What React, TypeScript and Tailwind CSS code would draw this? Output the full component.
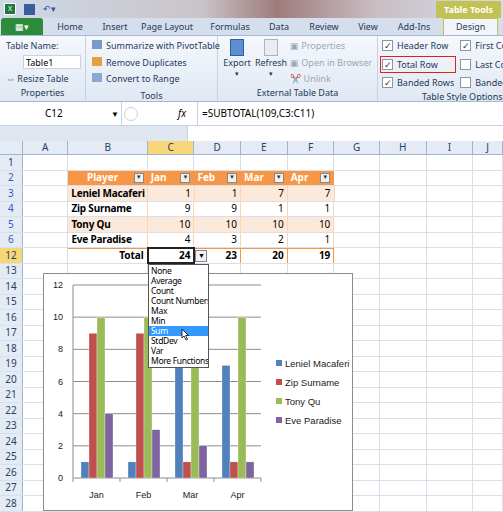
import React from 'react';

const cols = [
  { k: 'A', w: 46 }, { k: 'B', w: 80 }, { k: 'C', w: 47 }, { k: 'D', w: 47 },
  { k: 'E', w: 47 }, { k: 'F', w: 47 }, { k: 'G', w: 46 }, { k: 'H', w: 47 },
  { k: 'I', w: 47 }, { k: 'J', w: 30 },
];
const rowNums = [1, 2, 3, 4, 5, 6, 12, 13, 14, 15, 16, 17, 18, 19, 20, 21, 22, 23, 24, 25, 26, 27, 28];
const data: [string, number[]][] = [
  ['Leniel Macaferi', [1, 1, 7, 7]],
  ['Zip Surname', [9, 9, 1, 1]],
  ['Tony Qu', [10, 10, 10, 10]],
  ['Eve Paradise', [4, 3, 2, 1]],
];
const colors = ['#4f81bd', '#c0504d', '#9bbb59', '#8064a2'];

function Check({ on = true }: { on?: boolean }) {
  return (
    <span className="w-[11px] h-[11px] shrink-0 border border-[#8a96a8] bg-white inline-flex items-center justify-center text-[9px] leading-none text-[#333]">
      {on ? '✓' : ''}
    </span>
  );
}

function Ribbon() {
  return (
    <div className="text-[9px] text-[#1e395b] whitespace-nowrap">
      <div className="h-[18px] flex items-center gap-2 px-1 bg-[linear-gradient(90deg,#cfd9e8,#c9c4c8_40%,#a07b7c_55%,#c9bfc4_75%,#d6dde9)] relative">
        <span className="w-[12px] h-[12px] bg-[#1d7a3a] border border-white text-white text-[7px] flex items-center justify-center">X</span>
        <span className="w-[11px] h-[11px] bg-[#3b5e9a]" />
        <span className="text-[#2f5597]">↶▾</span>
        <div className="absolute right-[2px] top-[1px] h-[17px] px-2 bg-[#c2c254] text-white font-bold flex items-center">Table Tools</div>
      </div>
      <div className="h-[18px] flex items-end bg-[#d4deec] border-b border-[#a4b8d3]">
        <div className="w-[42px] h-[17px] bg-[#2e8b3c] rounded-t-[3px] mx-[1px] text-white flex items-center justify-center text-[9px]">▦▾</div>
        {['Home', 'Insert', 'Page Layout', 'Formulas', 'Data', 'Review', 'View', 'Add-Ins'].map((t, i) => (
          <span key={t} className={'h-[16px] flex items-center ' + ['w-[52px] justify-center', 'w-[38px] justify-center', 'w-[66px] justify-center', 'w-[60px] justify-center', 'w-[38px] justify-center', 'w-[52px] justify-center', 'w-[36px] justify-center', 'w-[56px] justify-center'][i]}>{t}</span>
        ))}
        <span className="h-[17px] px-3 ml-[1px] bg-[#f2f6fb] border border-b-0 border-[#c2c254] flex items-center">Design</span>
      </div>
      <div className="h-[66px] flex bg-[linear-gradient(#f5f8fc,#e0e8f3)] border-b border-[#a4b8d3] overflow-hidden">
        <div className="w-[86px] shrink-0 border-r border-[#c5d2e3] flex flex-col pl-[6px] pt-[3px]">
          <span>Table Name:</span>
          <span className="ml-[17px] mt-[2px] w-[58px] h-[14px] border border-[#c5d2e3] bg-white px-[2px] text-black">Table1</span>
          <span className="mt-[3px]"><span className="text-[#4a78b8]">⇔</span> Resize Table</span>
          <span className="mt-auto mb-[2px] text-center pr-[6px]">Properties</span>
        </div>
        <div className="w-[132px] shrink-0 border-r border-[#c5d2e3] flex flex-col pl-[6px] pt-[3px] gap-[3px]">
          <span><span className="inline-block w-[10px] h-[9px] bg-[#7a9bc8] mr-1" />Summarize with PivotTable</span>
          <span><span className="inline-block w-[10px] h-[9px] bg-[#e6a040] mr-1" />Remove Duplicates</span>
          <span><span className="inline-block w-[10px] h-[9px] bg-[#8aa8d0] mr-1" />Convert to Range</span>
          <span className="mt-auto mb-[2px] text-center pr-[6px]">Tools</span>
        </div>
        <div className="w-[160px] shrink-0 border-r border-[#c5d2e3] flex flex-col pt-[3px]">
          <div className="flex gap-[3px] pl-[4px]">
            <div className="flex flex-col items-center w-[30px]">
              <span className="w-[14px] h-[17px] bg-[#5b8fd1] border border-[#2f5fa0]" />
              <span>Export</span><span className="text-[7px] leading-none">▾</span>
            </div>
            <div className="flex flex-col items-center w-[32px]">
              <span className="w-[14px] h-[17px] bg-[#e8edf3] border border-[#a8b4c4]" />
              <span>Refresh</span><span className="text-[7px] leading-none">▾</span>
            </div>
            <div className="flex flex-col gap-[3px] text-[#9aa7b8]">
              <span>▣ Properties</span><span>▣ Open in Browser</span><span>✂ Unlink</span>
            </div>
          </div>
          <span className="mt-auto mb-[2px] text-center">External Table Data</span>
        </div>
        <div className="flex-1 flex flex-col pt-[3px] pl-[4px] overflow-hidden">
          <div className="flex gap-[6px]">
            <div className="flex flex-col gap-[5px]">
              <span className="flex items-center gap-[4px]"><Check />Header Row</span>
              <span className="flex items-center gap-[4px] border border-[#e02020] -mx-[2px] px-[1px] py-[1px] -my-[2px]"><Check />Total Row</span>
              <span className="flex items-center gap-[4px]"><Check />Banded Rows</span>
            </div>
            <div className="flex flex-col gap-[5px]">
              <span className="flex items-center gap-[4px]"><Check />First Co</span>
              <span className="flex items-center gap-[4px]"><Check on={false} />Last Co</span>
              <span className="flex items-center gap-[4px]"><Check on={false} />Bandec</span>
            </div>
          </div>
          <span className="mt-auto mb-[2px] pl-[40px]">Table Style Options</span>
        </div>
      </div>
      <div className="h-[24px] flex items-center bg-white border-b border-[#c5d2e3] text-[10px] text-black">
        <div className="w-[122px] flex items-center pl-[45px] border-r border-[#c5d2e3] h-full">C12<span className="ml-auto mr-[2px] text-[8px]">▼</span></div>
        <span className="w-[14px] h-[14px] rounded-full border border-[#c5d2e3] ml-[2px]" />
        <span className="italic ml-[40px] w-[14px]">fx</span>
        <span className="ml-[5px] border-l border-[#c5d2e3] pl-[4px] h-full flex items-center">=SUBTOTAL(109,C3:C11)</span>
      </div>
      <div className="h-[15px] bg-[#dfe6f0] w-[188px] border-r border-[#c5d2e3]" />
    </div>
  );
}

function Grid() {
  return (
    <div className="text-[10px] text-black">
      <div className="flex h-[14px] bg-[#e4ebf4] border-b border-[#9eb6ce]">
        <div className="w-[23px] border-r border-[#9eb6ce]" />
        {cols.map(c => (
          <div key={c.k} style={{ width: c.w }} className={'flex items-center justify-center border-r border-[#9eb6ce] text-[#27415f] ' + (c.k === 'C' ? 'bg-[#f8d77b]' : '')}>{c.k}</div>
        ))}
      </div>
      {rowNums.map(r => {
        const di = r >= 3 && r <= 6 ? r - 3 : -1;
        return (
          <div key={r} className="flex h-[15.5px] border-b border-[#dae0e8]">
            <div className={'w-[23px] flex items-center justify-center border-r border-[#9eb6ce] ' + (r === 12 ? 'bg-[#f8d77b] text-[#27415f]' : 'bg-[#e4ebf4] ' + (di >= 0 || r === 2 ? 'text-[#3a56c8]' : 'text-[#27415f]'))}>{r}</div>
            {cols.map((c, ci) => {
              let cls = 'border-r border-[#dae0e8] flex items-center px-[3px] whitespace-nowrap ';
              let content: React.ReactNode = '';
              const inTable = ci >= 1 && ci <= 5;
              if (r === 2 && inTable) {
                cls += 'bg-[#f79646] text-white font-bold border-[#f79646] ';
                content = (
                  <>
                    <span className={ci === 1 ? 'flex-1 text-center' : 'flex-1'}>{['', 'Player', 'Jan', 'Feb', 'Mar', 'Apr'][ci]}</span>
                    <span className="w-[10px] h-[10px] bg-[#f0f0f0] border border-[#888] text-[#333] text-[6px] flex items-center justify-center">▼</span>
                  </>
                );
              } else if (di >= 0 && inTable) {
                cls += (di % 2 === 0 ? 'bg-[#fde9d9] ' : 'bg-white ') + 'border-[#fbd4b4] ';
                content = ci === 1 ? <span className="font-bold tracking-[-0.2px]">{data[di][0]}</span> : <span className="ml-auto">{data[di][1][ci - 2]}</span>;
              } else if (r === 12 && inTable) {
                cls += 'border-t border-[#f79646] ';
                content = <span className="ml-auto font-bold">{['', 'Total', '24', '23', '20', '19'][ci]}</span>;
                if (ci === 2) cls += 'outline outline-2 outline-[#222] -outline-offset-1 relative ';
              }
              return (
                <div key={c.k} style={{ width: c.w }} className={cls}>
                  {content}
                  {r === 12 && ci === 2 && (
                    <span className="absolute -right-[14px] top-[1px] w-[12px] h-[12px] bg-[#eef2f8] border border-[#888] text-[7px] flex items-center justify-center">▼</span>
                  )}
                </div>
              );
            })}
          </div>
        );
      })}
    </div>
  );
}

function Chart() {
  const x0 = 29, w = 188, y0 = 204, yTop = 11;
  const sy = (v: number) => y0 - (v / 12) * (y0 - yTop);
  return (
    <div className="absolute left-[43px] top-[273px] w-[310px] h-[238px] bg-white border border-[#8c8c8c]">
      <svg width="310" height="238" className="absolute inset-0" fontFamily="Liberation Sans, sans-serif">
        {[0, 2, 4, 6, 8, 10, 12].map(v => (
          <g key={v}>
            <line x1={x0} x2={x0 + w} y1={sy(v)} y2={sy(v)} stroke="#8c8c8c" strokeWidth="1" />
            <text x={x0 - 10} y={sy(v) + 3} fontSize="9" textAnchor="end" fill="#222">{v}</text>
          </g>
        ))}
        <line x1={x0} x2={x0} y1={yTop} y2={y0 + 4} stroke="#8c8c8c" />
        {['Jan', 'Feb', 'Mar', 'Apr'].map((m, gi) => (
          <g key={m}>
            <line x1={x0 + (gi + 1) * 47} x2={x0 + (gi + 1) * 47} y1={y0} y2={y0 + 4} stroke="#8c8c8c" />
            {data.map((d, si) => {
              const v = d[1][gi];
              return <rect key={si} x={x0 + gi * 47 + 8 + si * 8} y={sy(v)} width="8" height={y0 - sy(v)} fill={colors[si]} stroke="#fff" strokeWidth="0.3" />;
            })}
            <text x={x0 + gi * 47 + 23.5} y={y0 + 20} fontSize="9" textAnchor="middle" fill="#222">{m}</text>
          </g>
        ))}
        {data.map((d, si) => (
          <g key={si}>
            <rect x={232} y={86 + si * 19} width="6" height="6" fill={colors[si]} />
            <text x={241} y={93 + si * 19} fontSize="9.5" fill="#222">{d[0]}</text>
          </g>
        ))}
      </svg>
    </div>
  );
}

function Menu() {
  const items = ['None', 'Average', 'Count', 'Count Numbers', 'Max', 'Min', 'Sum', 'StdDev', 'Var', 'More Functions'];
  return (
    <div className="absolute left-[148px] top-[264px] w-[61px] bg-white border border-[#555] py-[1px] text-[8.5px] leading-[10px] text-black z-10 overflow-hidden tracking-[-0.3px]">
      {items.map(i => (
        <div key={i} className={'px-[2px] whitespace-nowrap relative ' + (i === 'Sum' ? 'bg-[#3399ff] text-white' : '')}>
          {i}
          {i === 'Sum' && (
            <svg className="absolute left-[32px] top-[2px]" width="9" height="13" viewBox="0 0 9 13">
              <path d="M1 1 L1 10 L3 8 L5 12 L6.5 11.3 L4.6 7.5 L7.5 7.5 Z" fill="#fff" stroke="#000" strokeWidth="0.8" />
            </svg>
          )}
        </div>
      ))}
    </div>
  );
}

export default function App() {
  return (
    <div className="relative w-[503px] h-[512px] overflow-hidden bg-white font-['Liberation_Sans',sans-serif]">
      <Ribbon />
      <Grid />
      <Chart />
      <Menu />
    </div>
  );
}
